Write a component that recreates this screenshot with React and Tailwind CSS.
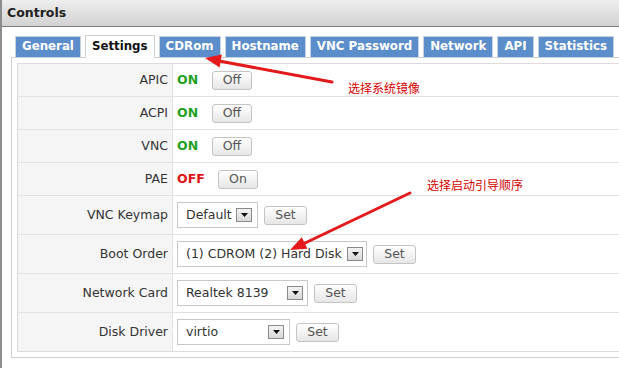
import React from "react";

const font = { fontFamily: '"DejaVu Sans", Verdana, sans-serif' };

function Btn({ children, w }) {
  return (
    <div
      className={`flex h-[19px] items-center justify-center rounded-[3px] border border-[#c4c4c4] bg-gradient-to-b from-[#ffffff] to-[#e6e6e6] text-[12.5px] text-[#555] ${w}`}
    >
      {children}
    </div>
  );
}

function Toggle({ on }) {
  return (
    <div className="flex items-center">
      {on ? (
        <span className="w-[35px] text-[12.5px] font-bold text-[#22a022]">ON</span>
      ) : (
        <span className="w-[41px] text-[12.5px] font-bold text-[#dd1515]">OFF</span>
      )}
      <Btn w="w-[40px]">{on ? "Off" : "On"}</Btn>
    </div>
  );
}

function Arrow() {
  return (
    <div className="flex h-[14px] w-[16px] shrink-0 items-center justify-center border border-[#8a8a8a] bg-gradient-to-b from-[#f4f4f4] to-[#d8d8d8]">
      <svg width="7" height="4" viewBox="0 0 7 4">
        <polygon points="0,0 7,0 3.5,4" fill="#111" />
      </svg>
    </div>
  );
}

function Select({ text, w, pr }) {
  return (
    <div className="flex items-center">
      <div
        className={`flex h-[26px] items-center justify-between border border-[#c8c8c8] bg-white pl-[8px] text-[12.5px] text-[#333] ${w} ${pr}`}
      >
        <span className="whitespace-nowrap">{text}</span>
        <Arrow />
      </div>
      <div className="ml-[6px]">
        <Btn w="w-[43px]">Set</Btn>
      </div>
    </div>
  );
}

function Row({ label, h, children, last }) {
  return (
    <div className={`grid grid-cols-[155px_1fr] ${h} ${last ? "" : "border-b border-[#e2e2e2]"}`}>
      <div className="flex items-center justify-end border-r border-[#e2e2e2] bg-[#f5f5f5] pr-[4px] text-[12.5px] text-[#333]">
        {label}
      </div>
      <div className="flex items-center pl-[4px]">{children}</div>
    </div>
  );
}

const tabs = ["General", "Settings", "CDRom", "Hostname", "VNC Password", "Network", "API", "Statistics"];

export default function App() {
  return (
    <div
      className="relative h-[368px] w-[619px] overflow-hidden border-l-2 border-[#8c8c8c] bg-white"
      style={font}
    >
      <div className="flex h-[27px] items-center border-b border-[#7c7c7c] bg-gradient-to-b from-[#eeeeee] to-[#d2d2d2] pl-[5px] text-[12.5px] font-bold text-[#222]">
        Controls
      </div>
      <div className="pl-[9px] pt-[8px]">
        <div className="relative z-10 -mb-px flex w-[700px] items-end gap-[4px] pl-[4px]">
          {tabs.map((t) =>
            t === "Settings" ? (
              <div
                key={t}
                className="flex h-[23px] shrink-0 items-center whitespace-nowrap border border-b-white border-[#cfcfcf] bg-white px-[6px] text-[11.8px] font-bold text-[#111]"
              >
                {t}
              </div>
            ) : (
              <div
                key={t}
                className="flex h-[22px] shrink-0 items-center whitespace-nowrap border border-[#c6d2e0] bg-[#5b8dca] px-[6px] text-[11.8px] font-bold text-white"
              >
                {t}
              </div>
            )
          )}
        </div>
        <div className="w-[700px] border-y border-l border-[#cfcfcf] py-[5px] pl-[5px]">
          <div className="border border-[#dcdcdc]">
            <Row label="APIC" h="h-[33px]"><Toggle on /></Row>
            <Row label="ACPI" h="h-[33px]"><Toggle on /></Row>
            <Row label="VNC" h="h-[33px]"><Toggle on /></Row>
            <Row label="PAE" h="h-[33px]"><Toggle on={false} /></Row>
            <Row label="VNC Keymap" h="h-[39px]">
              <Select text="Default" w="w-[81px]" pr="pr-[5px]" />
            </Row>
            <Row label="Boot Order" h="h-[39px]">
              <Select text="(1) CDROM (2) Hard Disk" w="w-[190px]" pr="pr-[3px]" />
            </Row>
            <Row label="Network Card" h="h-[39px]">
              <Select text="Realtek 8139" w="w-[131px]" pr="pr-[4px]" />
            </Row>
            <Row label="Disk Driver" h="h-[38px]" last>
              <Select text="virtio" w="w-[113px]" pr="pr-[5px]" />
            </Row>
          </div>
        </div>
      </div>

      {/* annotations overlay */}
      <svg
        className="pointer-events-none absolute left-[-2px] top-0 z-20"
        width="619"
        height="368"
        viewBox="0 0 619 368"
      >
        <line x1="332" y1="82" x2="219" y2="61" stroke="#e3191b" strokeWidth="3" strokeLinecap="round" />
        <polygon points="205,58 221.8,54.6 219.6,67.4" fill="#e3191b" />
        <line x1="410" y1="193" x2="303" y2="244" stroke="#e3191b" strokeWidth="3" strokeLinecap="round" />
        <polygon points="290,250 307.4,248.7 301.8,237.3" fill="#e3191b" />
      </svg>
      <div
        className="absolute left-[346px] top-[80px] z-20 text-[12px] leading-[16px] text-[#d40000]"
        style={{ fontFamily: '"Noto Sans CJK SC", sans-serif' }}
      >
        选择系统镜像
      </div>
      <div
        className="absolute left-[425px] top-[177px] z-20 text-[12px] leading-[16px] text-[#d40000]"
        style={{ fontFamily: '"Noto Sans CJK SC", sans-serif' }}
      >
        选择启动引导顺序
      </div>
    </div>
  );
}
